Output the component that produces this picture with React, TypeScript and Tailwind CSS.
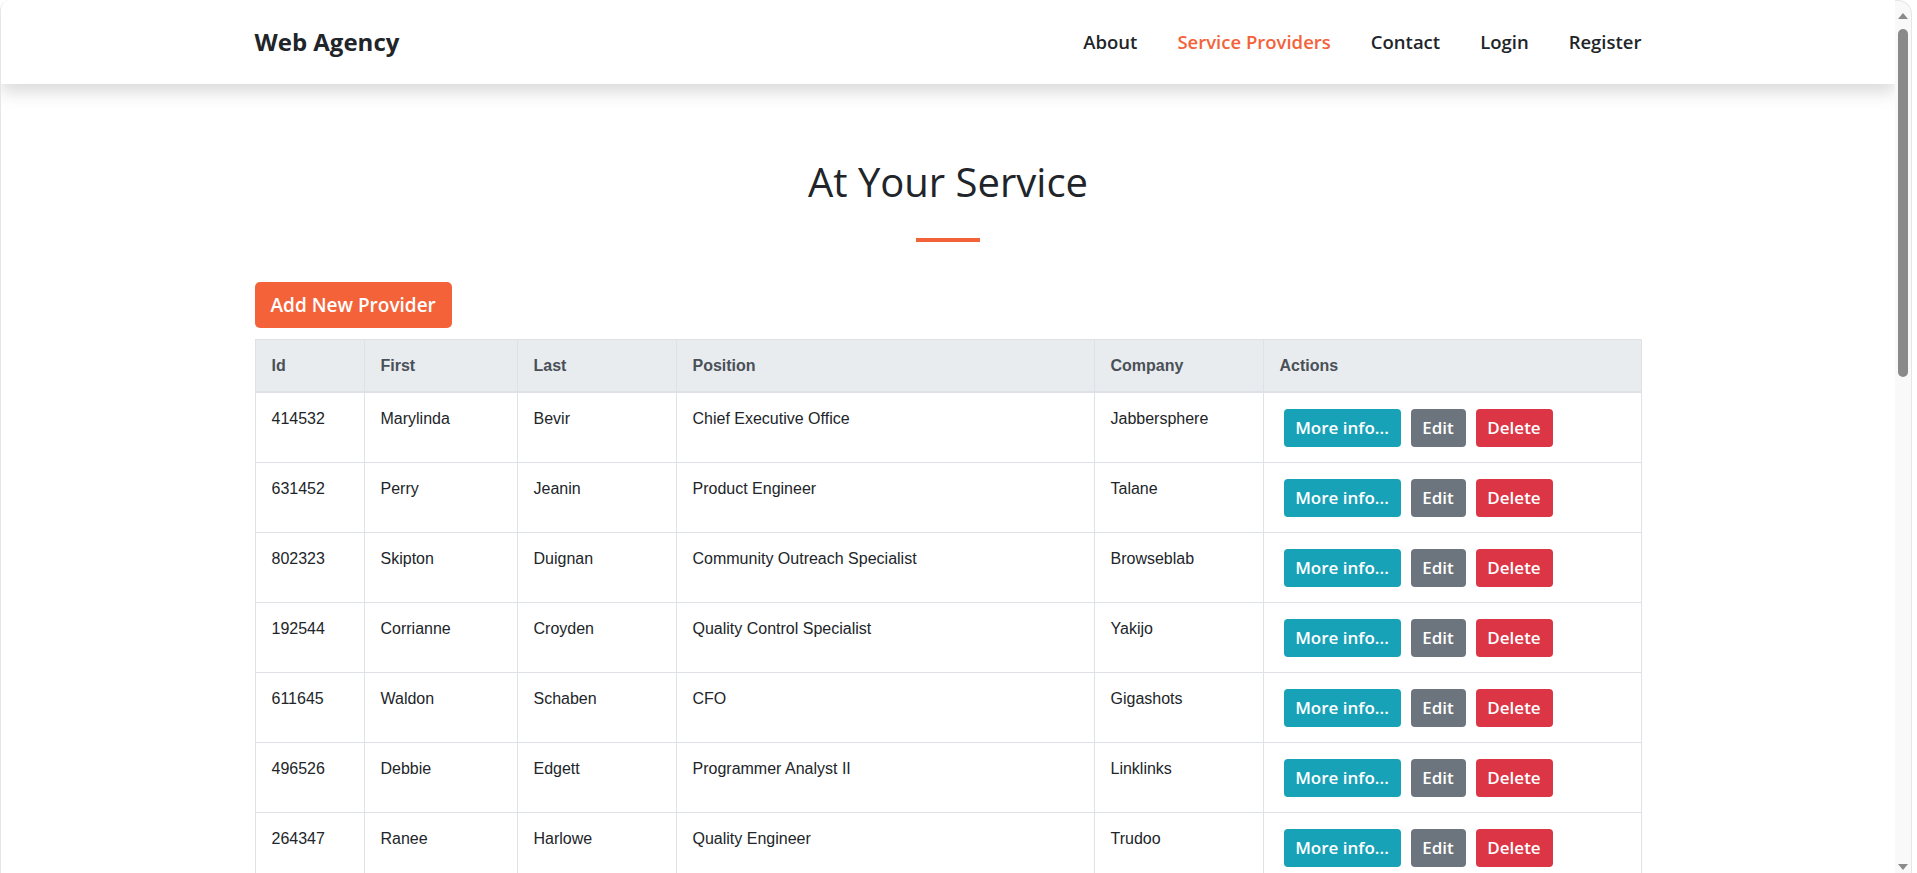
import React from "react";

type Provider = {
  id: string;
  first: string;
  last: string;
  position: string;
  company: string;
};

const providers: Provider[] = [
  { id: "414532", first: "Marylinda", last: "Bevir", position: "Chief Executive Office", company: "Jabbersphere" },
  { id: "631452", first: "Perry", last: "Jeanin", position: "Product Engineer", company: "Talane" },
  { id: "802323", first: "Skipton", last: "Duignan", position: "Community Outreach Specialist", company: "Browseblab" },
  { id: "192544", first: "Corrianne", last: "Croyden", position: "Quality Control Specialist", company: "Yakijo" },
  { id: "611645", first: "Waldon", last: "Schaben", position: "CFO", company: "Gigashots" },
  { id: "496526", first: "Debbie", last: "Edgett", position: "Programmer Analyst II", company: "Linklinks" },
  { id: "264347", first: "Ranee", last: "Harlowe", position: "Quality Engineer", company: "Trudoo" },
];

const head = "font-['Open_Sans','Noto_Sans',sans-serif]";
const cols = "grid grid-cols-[109px_153px_159px_418px_169px_1fr]";

function NavLink({ label, active }: { label: string; active?: boolean }) {
  return (
    <a href="#" className={`text-[18.5px] font-semibold ${active ? "text-[#f4623a]" : "text-[#212529]"}`}>
      {label}
    </a>
  );
}

function Row({ p }: { p: Provider }) {
  const cell = "border-r border-[#dee2e6] px-4 pt-[14px]";
  return (
    <div className={`${cols} h-[70px] shrink-0 border-b border-[#dee2e6] text-[16px] text-[#212529]`}>
      <div className={cell}>{p.id}</div>
      <div className={cell}>{p.first}</div>
      <div className={cell}>{p.last}</div>
      <div className={cell}>{p.position}</div>
      <div className={cell}>{p.company}</div>
      <div className={`flex items-start gap-[10px] pl-5 pt-4 ${head}`}>
        <button className="h-[38px] w-[117px] rounded-[4px] bg-[#17a2b8] text-[17px] font-semibold text-white">More info...</button>
        <button className="h-[38px] w-[55px] rounded-[4px] bg-[#6c757d] text-[17px] font-semibold text-white">Edit</button>
        <button className="h-[38px] w-[77px] rounded-[4px] bg-[#dc3545] text-[17px] font-semibold text-white">Delete</button>
      </div>
    </div>
  );
}

// the browser's own scrollbar, as it shows in the capture
function Scrollbar() {
  return (
    <div className="flex w-[17px] shrink-0 flex-col items-center rounded-tr-[14px] border-r border-t border-[#e6e6e6] bg-[#f9f9f9]">
      <svg width="10" height="6" viewBox="0 0 10 6" className="mt-[12px]">
        <path d="M5 0L10 6H0z" fill="#8a8a8a" />
      </svg>
      <div className="mt-[10px] h-[348px] w-[10px] rounded-full bg-[#8a8a8a]" />
      <div className="flex-1" />
      <svg width="10" height="6" viewBox="0 0 10 6" className="mb-[3px]">
        <path d="M0 0H10L5 6z" fill="#8a8a8a" />
      </svg>
    </div>
  );
}

export default function App() {
  return (
    <div className="flex h-screen overflow-hidden bg-white font-['Liberation_Sans',Arial,sans-serif]">
      <div className="flex w-[1895px] shrink-0 flex-col overflow-hidden rounded-tl-[10px] border-l border-[#e6e6e6]">
        <nav className="relative z-10 h-[84px] shrink-0 bg-white shadow-[0_8px_16px_rgba(0,0,0,0.15)]">
          <div className={`mx-auto flex h-full w-[1387px] items-center justify-between ${head}`}>
            <a href="#" className="text-[24px] font-bold text-[#212529]">Web Agency</a>
            <div className="flex items-center gap-10">
              <NavLink label="About" />
              <NavLink label="Service Providers" active />
              <NavLink label="Contact" />
              <NavLink label="Login" />
              <NavLink label="Register" />
            </div>
          </div>
        </nav>

        <main className="mx-auto flex w-[1387px] flex-col">
          <h1 className={`mt-[74px] text-center text-[40px] leading-[48px] text-[#212529] ${head}`}>At Your Service</h1>
          <div className="mx-auto mt-8 h-1 w-16 bg-[#f4623a]" />

          <button className={`mt-10 h-[46px] self-start rounded-[5px] bg-[#f4623a] px-4 text-[19px] font-semibold text-white ${head}`}>
            Add New Provider
          </button>

          <div className="mt-[11px] border border-[#dee2e6]">
            <div className={`${cols} h-[53px] border-b-2 border-[#dee2e6] bg-[#e9ecef] text-[16px] font-bold text-[#495057]`}>
              {["Id", "First", "Last", "Position", "Company", "Actions"].map((h) => (
                <div key={h} className="flex items-center border-r border-[#dee2e6] px-4 last:border-r-0">
                  {h}
                </div>
              ))}
            </div>
            {providers.map((p) => (
              <Row key={p.id} p={p} />
            ))}
          </div>
        </main>
      </div>
      <Scrollbar />
    </div>
  );
}
